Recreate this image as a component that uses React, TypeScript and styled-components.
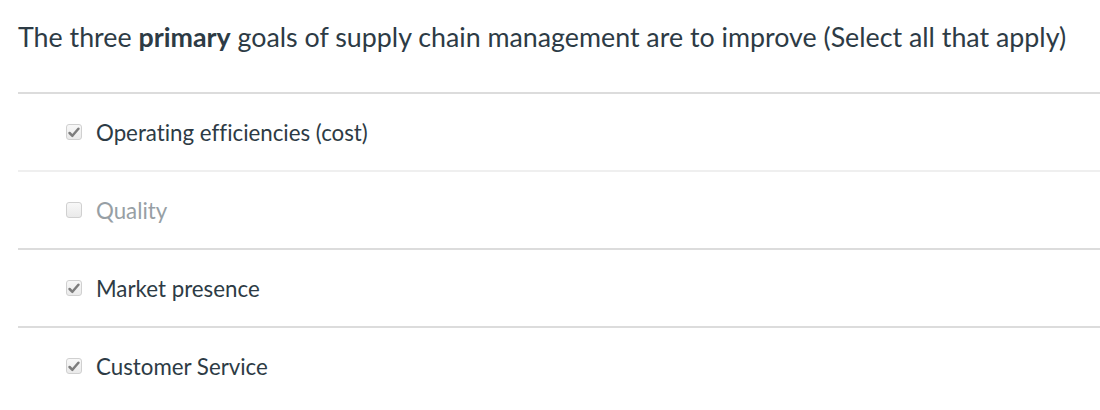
import styled, { createGlobalStyle } from 'styled-components';

const GlobalStyle = createGlobalStyle`
  body {
    margin: 0;
    background: #fff;
    font-family: Lato, "Open Sans", sans-serif;
    color: #2d3b45;
    font-variant-ligatures: none;
  }
`;

const Page = styled.div`
  padding: 18px 0 0 18px;
`;

const Question = styled.p`
  margin: 0;
  font-size: 26.8px;
  line-height: 38px;
  padding-bottom: 36px;
  border-bottom: 2px solid #dcdcdc;
`;

const AnswerList = styled.div`
  display: flex;
  flex-direction: column;
`;

const Answer = styled.label<{ $divider?: 'light' | 'dark' | 'none' }>`
  display: flex;
  align-items: center;
  gap: 14px;
  height: 76px;
  padding-left: 48px;
  font-size: 22.3px;
  border-bottom: ${(p) =>
    p.$divider === 'none' ? 'none' : `2px solid ${p.$divider === 'light' ? '#efefef' : '#dcdcdc'}`};
`;

const Label = styled.span<{ $muted?: boolean }>`
  color: ${(p) => (p.$muted ? '#979fa5' : '#2d3b45')};
`;

const Box = styled.span`
  width: 14px;
  height: 14px;
  border: 1px solid #d0d0d0;
  border-radius: 3px;
  background: linear-gradient(#f8f8f8, #eaeaea);
  display: flex;
  align-items: center;
  justify-content: center;
  flex-shrink: 0;
`;

function Check({ checked }: { checked: boolean }) {
  return (
    <Box>
      {checked && (
        <svg width='12' height='11' viewBox='0 0 12 11'>
          <path d='M1.6 6 L4.4 8.8 L10.4 1.8' fill='none' stroke='#7d7d7d' strokeWidth='2.5' strokeLinecap='round' strokeLinejoin='round' />
        </svg>
      )}
    </Box>
  );
}

const answers = [
  { text: 'Operating efficiencies (cost)', checked: true, divider: 'light' as const },
  { text: 'Quality', checked: false, divider: 'dark' as const },
  { text: 'Market presence', checked: true, divider: 'dark' as const },
  { text: 'Customer Service', checked: true, divider: 'none' as const },
];

export default function App() {
  return (
    <>
      <GlobalStyle />
      <Page>
        <Question>
          The three <strong>primary</strong> goals of supply chain management are to improve (Select all that apply)
        </Question>
        <AnswerList>
          {answers.map((a) => (
            <Answer key={a.text} $divider={a.divider}>
              <Check checked={a.checked} />
              <Label $muted={!a.checked}>{a.text}</Label>
            </Answer>
          ))}
        </AnswerList>
      </Page>
    </>
  );
}
